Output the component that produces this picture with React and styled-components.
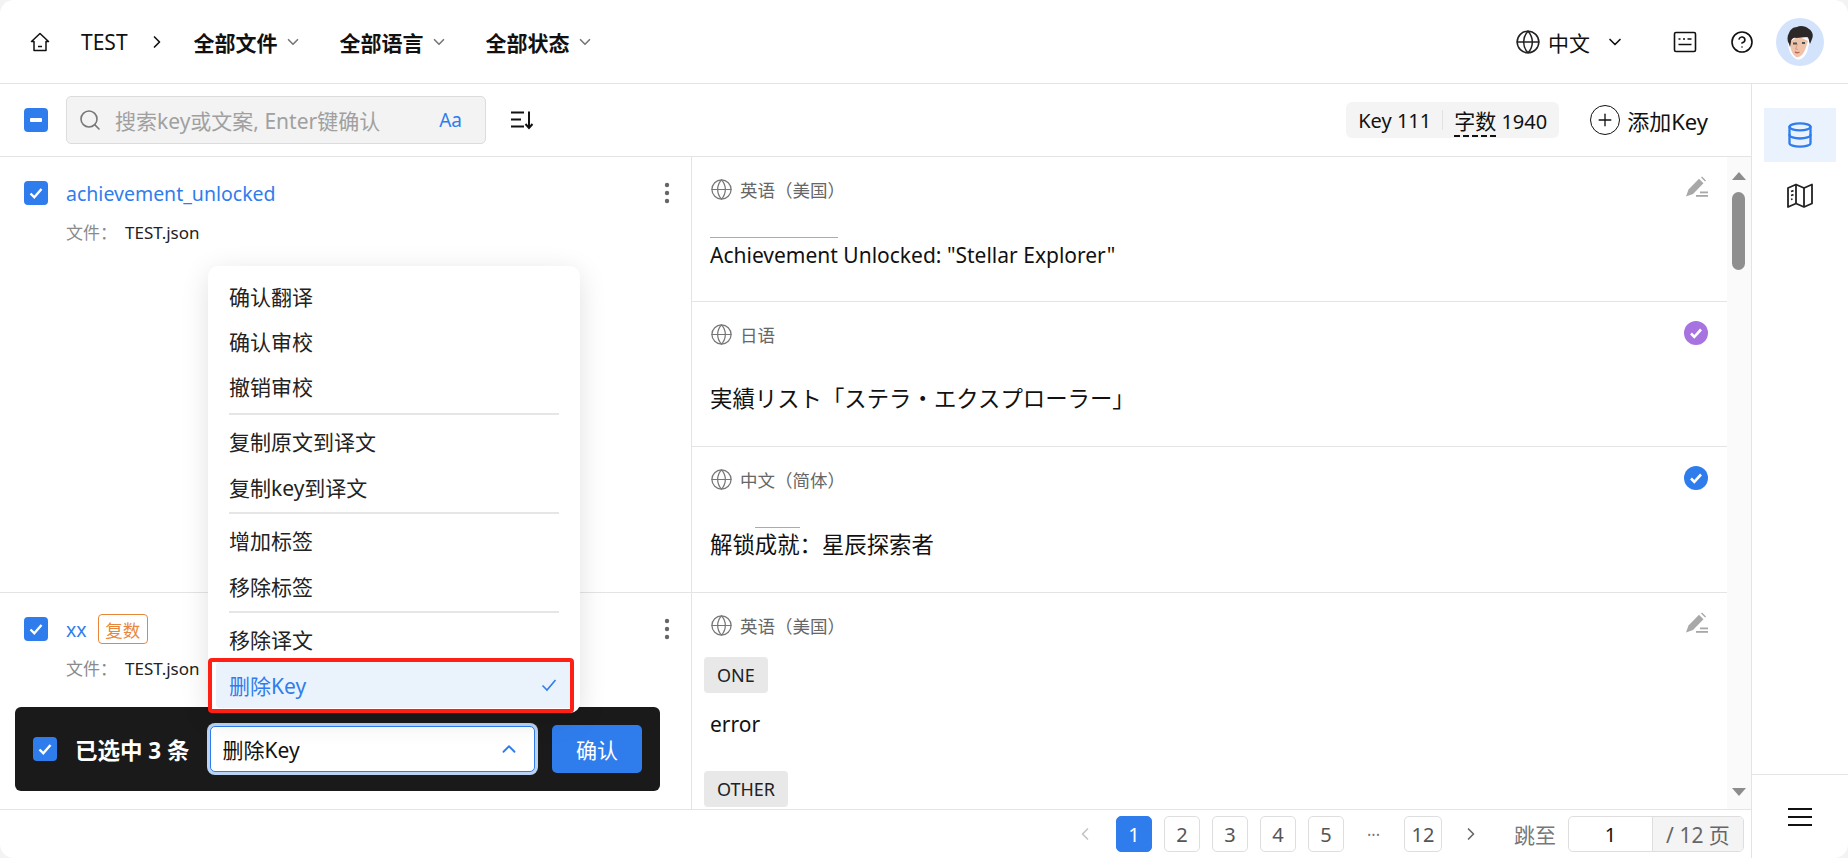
import styled, { createGlobalStyle } from "styled-components";
import { ChevronDown, ChevronLeft, ChevronRight, ChevronUp, CircleHelp, Database, Globe, Search, Plus } from "lucide-react";

const GlobalStyle = createGlobalStyle`
  html, body { margin: 0; height: 100%; background: #f3f3f3; overflow: hidden; }
  body { font-family: "Noto Sans", "Noto Sans CJK SC", sans-serif; color: #111; }
  * { box-sizing: border-box; }
`;

const BLUE = "#2f7ded";
const MENU_GROUPS = [
  ["确认翻译", "确认审校", "撤销审校"],
  ["复制原文到译文", "复制key到译文"],
  ["增加标签", "移除标签"],
  ["移除译文"],
];

function HomeIcon() {
  return (
    <svg width="24" height="24" viewBox="0 0 24 24" fill="none" stroke="#111" strokeWidth="1.5" strokeLinejoin="round">
      <path d="M3.5 11.5 12 3.5l8.5 8H18v9H6v-9z" />
      <path d="M10 16.5h4" />
    </svg>
  );
}

function SortIcon() {
  return (
    <svg width="24" height="20" viewBox="0 0 24 20" fill="none" stroke="#111" strokeWidth="2">
      <path d="M1 2.5h13M1 9.5h10M1 16.5h13M19 1.5v16M15.5 14l3.500 4 3.500-4" />
    </svg>
  );
}

function KeyboardIcon() {
  return (
    <svg width="24" height="22" viewBox="0 0 24 22" fill="none" stroke="#111" strokeWidth="1.6">
      <rect x="1.5" y="1.5" width="21" height="19" rx="1.5" />
      <path d="M5.5 8h2M10 8h2M14.5 8h4M5.5 13.5h13" />
    </svg>
  );
}

function MapIcon() {
  return (
    <svg width="28" height="26" viewBox="0 0 28 26" fill="none" stroke="#222" strokeWidth="1.8" strokeLinejoin="round">
      <path d="M2 5l8-3.500 8 3.500 8-3.500V20.500L18 24l-8-3.500L2 24z" />
      <path d="M10 1.500v19M18 5v19M5 8.500l2.500-.8M5 12.500l2.500-.8M5 16.500l1.500-.5" />
    </svg>
  );
}

function EditIcon() {
  return (
    <svg width="26" height="22" viewBox="0 0 26 22" fill="#a8a8a8">
      <path d="M1 20.5l2.500-7L14 2.800l4.500 4.500L8 18z" />
      <path d="M16 1.500l1-1 4 4-1 1z" />
      <rect x="11" y="19" width="12" height="1.8" />
      <rect x="15" y="15.5" width="8" height="1.8" />
    </svg>
  );
}

function DotsIcon() {
  return (
    <svg width="6" height="22" viewBox="0 0 6 22" fill="#666">
      <circle cx="3" cy="3" r="2.2" />
      <circle cx="3" cy="11" r="2.2" />
      <circle cx="3" cy="19" r="2.2" />
    </svg>
  );
}

function AvatarFace() {
  return (
    <svg width="48" height="48" viewBox="0 0 48 48">
      <circle cx="24" cy="24" r="24" fill="#d3e3fb" />
      <path d="M12 24c0 8 3 14 8 17 4 2 8-1 11-7l3-12-12-6z" fill="#fff" />
      <path d="M14 24c0 7 2 12 6 15 3 1 7-2 9-7l3-9-10-5z" fill="#efc3aa" />
      <path d="M13 26c-2-3-2-8 0-11 1-3 4-6 8-6 3-2 9-1 12 2 3 2 5 6 3 10l-2 5-1-3c0-2-1-4-2-4l-11 1c-2-1-5 1-5 4l-1 5z" fill="#2b2827" />
      <path d="M17 25.500h4M26 25h3" stroke="#44565c" strokeWidth="1.8" />
      <path d="M21.500 26l-2 5 2.500.5" stroke="#d99a82" strokeWidth="1" fill="none" />
      <path d="M19 34c2 1 3 1 4.500 0" stroke="#c0625a" strokeWidth="1.5" fill="none" />
    </svg>
  );
}

function Check({ minus }) {
  return (
    <CheckBox>
      {minus ? (
        <MinusBar />
      ) : (
        <svg width="16" height="16" viewBox="0 0 16 16" fill="none" stroke="#fff" strokeWidth="2.4">
          <path d="M2.500 8.500l3.800 3.800L13.500 4" />
        </svg>
      )}
    </CheckBox>
  );
}

function StatusMark({ status }) {
  if (status === "edit") return <EditIcon />;
  return (
    <StatusDot $status={status}>
      <svg width="16" height="16" viewBox="0 0 16 16" fill="none" stroke="#fff" strokeWidth="2.6">
        <path d="M3 8.500l3.300 3.300L13 4.500" />
      </svg>
    </StatusDot>
  );
}

function LangLabel({ children }) {
  return (
    <LangRow>
      <Globe size={23} strokeWidth={1.3} color="#777" />
      {children}
    </LangRow>
  );
}

export default function App() {
  const translations = [
    { id: "en", lang: "英语（美国）", status: "edit", latin: true, text: <><Mark>Achievement</Mark> Unlocked: "Stellar Explorer"</> },
    { id: "ja", lang: "日语", status: "reviewed", text: <JaText lang="ja">実績リスト「ステラ・エクスプローラー」</JaText> },
    { id: "zh", lang: "中文（简体）", status: "done", text: <>解锁<Mark>成就</Mark>：星辰探索者</> },
  ];

  return (
    <Frame>
      <GlobalStyle />
      <Header>
        <HomeIcon />
        <Project>TEST</Project>
        <ChevronRight size={20} strokeWidth={2} color="#111" />
        <Filters>
          {["全部文件", "全部语言", "全部状态"].map((f) => (
            <Filter key={f}>
              {f}
              <ChevronDown size={18} strokeWidth={2.2} color="#777" />
            </Filter>
          ))}
        </Filters>
        <HeaderRight>
          <LangSwitch>
            <Globe size={26} strokeWidth={1.4} color="#222" />
            中文
            <ChevronDown size={20} strokeWidth={2} color="#111" />
          </LangSwitch>
          <KeyboardIcon />
          <CircleHelp size={24} strokeWidth={1.6} color="#111" />
          <Avatar><AvatarFace /></Avatar>
        </HeaderRight>
      </Header>

      <Body>
        <Main>
          <Toolbar>
            <Check minus />
            <SearchBox>
              <Search size={24} strokeWidth={1.6} color="#777" />
              <Placeholder>搜索key或文案, Enter键确认</Placeholder>
              <CaseToggle>Aa</CaseToggle>
            </SearchBox>
            <SortIcon />
            <Stats>
              <span>Key 111</span>
              <StatDivider />
              <span><Dashed>字数</Dashed> 1940</span>
            </Stats>
            <AddKey>
              <AddCircle><Plus size={20} strokeWidth={1.6} color="#111" /></AddCircle>
              添加Key
            </AddKey>
          </Toolbar>

          <Content>
            <List>
              <KeyRow>
                <KeyCell>
                  <KeyTitle>
                    <Check />
                    <KeyName>achievement_unlocked</KeyName>
                    <DotsSlot><DotsIcon /></DotsSlot>
                  </KeyTitle>
                  <FileLine><FileLabel>文件：</FileLabel>TEST.json</FileLine>
                </KeyCell>
                <Cells>
                  {translations.map((t) => (
                    <Cell key={t.id}>
                      <CellTop>
                        <LangLabel>{t.lang}</LangLabel>
                        <StatusMark status={t.status} />
                      </CellTop>
                      <CellText $latin={t.latin}>{t.text}</CellText>
                    </Cell>
                  ))}
                </Cells>
              </KeyRow>
              <KeyRow>
                <KeyCell>
                  <KeyTitle>
                    <Check />
                    <KeyName>xx</KeyName>
                    <PluralTag>复数</PluralTag>
                    <DotsSlot><DotsIcon /></DotsSlot>
                  </KeyTitle>
                  <FileLine><FileLabel>文件：</FileLabel>TEST.json</FileLine>
                </KeyCell>
                <Cells>
                  <PluralCell>
                    <CellTop>
                      <LangLabel>英语（美国）</LangLabel>
                      <EditIcon />
                    </CellTop>
                    <Chip>ONE</Chip>
                    <PluralText>error</PluralText>
                    <Chip>OTHER</Chip>
                  </PluralCell>
                </Cells>
              </KeyRow>
            </List>
            <ScrollBar>
              <ArrowUp />
              <Thumb />
              <ArrowDown />
            </ScrollBar>

            <ActionMenu>
              {MENU_GROUPS.map((group, i) => (
                <MenuGroup key={i}>
                  {i > 0 && <MenuDivider />}
                  {group.map((item) => (
                    <MenuItem key={item}>{item}</MenuItem>
                  ))}
                </MenuGroup>
              ))}
              <MenuItem $selected>
                删除Key
                <svg width="16" height="14" viewBox="0 0 16 14" fill="none" stroke={BLUE} strokeWidth="1.6">
                  <path d="M1.500 7.500l4.500 4.500L14.500 2" />
                </svg>
              </MenuItem>
              <RedBox />
            </ActionMenu>

            <BatchBar>
              <Check />
              <BatchCount>已选中 3 条</BatchCount>
              <BatchSelect>
                删除Key
                <ChevronUp size={22} strokeWidth={2} color={BLUE} />
              </BatchSelect>
              <ConfirmButton>确认</ConfirmButton>
            </BatchBar>
          </Content>

          <Footer>
            <PrevPage><ChevronLeft size={20} strokeWidth={2} color="#c4c4c4" /></PrevPage>
            <Page $active>1</Page>
            <Page>2</Page>
            <Page>3</Page>
            <Page>4</Page>
            <Page>5</Page>
            <Ellipsis>•••</Ellipsis>
            <Page $wide>12</Page>
            <NextPage><ChevronRight size={20} strokeWidth={2} color="#666" /></NextPage>
            <JumpLabel>跳至</JumpLabel>
            <JumpGroup>
              <JumpInput>1</JumpInput>
              <JumpAddon>/ 12 页</JumpAddon>
            </JumpGroup>
          </Footer>
        </Main>

        <Sidebar>
          <SideTab $active><Database size={28} strokeWidth={2} color={BLUE} /></SideTab>
          <SideTab><MapIcon /></SideTab>
          <SideBottom>
            <Burger />
          </SideBottom>
        </Sidebar>
      </Body>
    </Frame>
  );
}

const Frame = styled.div`
  width: 1848px;
  height: 858px;
  display: flex;
  flex-direction: column;
  background: #fff;
  border-radius: 14px;
  overflow: hidden;
`;

const Header = styled.header`
  height: 84px;
  flex: none;
  display: flex;
  align-items: center;
  padding: 0 24px 0 28px;
  border-bottom: 1px solid #e4e4e4;
`;

const Project = styled.span`
  margin: 0 19px 0 29px;
  font-size: 21px;
`;

const Filters = styled.div`
  display: flex;
  gap: 38px;
  margin-left: 27px;
`;

const Filter = styled.span`
  display: flex;
  align-items: center;
  gap: 6px;
  font-size: 21px;
  font-weight: 700;
`;

const HeaderRight = styled.div`
  margin-left: auto;
  display: flex;
  align-items: center;
  gap: 33px;
`;

const LangSwitch = styled.span`
  display: flex;
  align-items: center;
  gap: 7px;
  font-size: 21px;
  margin-right: 15px;

  svg:last-child {
    margin-left: 8px;
  }
`;

const Avatar = styled.span`
  display: flex;
  margin-left: -11px;
`;

const Body = styled.div`
  flex: 1;
  min-height: 0;
  display: flex;
`;

const Main = styled.div`
  flex: 1;
  min-width: 0;
  display: flex;
  flex-direction: column;
`;

const Toolbar = styled.div`
  height: 73px;
  flex: none;
  display: flex;
  align-items: center;
  padding: 0 24px;
  border-bottom: 1px solid #e4e4e4;

  > svg {
    margin-left: 24px;
  }
`;

const CheckBox = styled.span`
  width: 24px;
  height: 24px;
  flex: none;
  display: flex;
  align-items: center;
  justify-content: center;
  border-radius: 4px;
  background: ${BLUE};
`;

const MinusBar = styled.span`
  width: 12px;
  height: 3.5px;
  border-radius: 1px;
  background: #fff;
`;

const SearchBox = styled.div`
  width: 420px;
  height: 48px;
  margin-left: 18px;
  padding: 0 23px 0 11px;
  display: flex;
  align-items: center;
  background: #f3f3f3;
  border: 1px solid #dcdcdc;
  border-radius: 5px;
`;

const Placeholder = styled.span`
  margin-left: 13px;
  font-size: 21px;
  color: #a0a0a0;
  white-space: nowrap;
`;

const CaseToggle = styled.span`
  margin-left: auto;
  font-size: 19px;
  color: ${BLUE};
`;

const Stats = styled.div`
  margin-left: auto;
  height: 36px;
  padding: 0 12px;
  display: flex;
  align-items: center;
  gap: 11px;
  background: #f4f4f4;
  border-radius: 6px;
  font-size: 20px;
  white-space: nowrap;
`;

const StatDivider = styled.i`
  width: 1px;
  height: 20px;
  background: #e2e2e2;
`;

const Dashed = styled.span`
  font-size: 21px;
  border-bottom: 2px dashed #111;
`;

const AddKey = styled.div`
  margin-left: 31px;
  margin-right: 19px;
  display: flex;
  align-items: center;
  gap: 7px;
  font-size: 22px;
  white-space: nowrap;
`;

const AddCircle = styled.span`
  width: 30px;
  height: 30px;
  display: flex;
  align-items: center;
  justify-content: center;
  border: 1.6px solid #111;
  border-radius: 50%;
`;

const Content = styled.div`
  position: relative;
  flex: 1;
  min-height: 0;
  display: flex;
  overflow: hidden;
`;

const List = styled.div`
  flex: 1;
  min-width: 0;
  display: flex;
  flex-direction: column;
`;

const KeyRow = styled.div`
  display: grid;
  grid-template-columns: 692px 1fr;
  border-bottom: 1px solid #e4e4e4;

  &:last-child {
    flex: 1;
    min-height: 0;
    border-bottom: 0;
  }
`;

const KeyCell = styled.div`
  padding: 24px 24px 0;
  border-right: 1px solid #e4e4e4;
`;

const KeyTitle = styled.div`
  display: flex;
  align-items: center;
  height: 24px;
  gap: 18px;
`;

const KeyName = styled.span`
  font-size: 19.5px;
  color: ${BLUE};
`;

const DotsSlot = styled.span`
  display: flex;
  margin-left: auto;
  margin-right: -3px;
`;

const PluralTag = styled.span`
  margin-left: -7px;
  width: 50px;
  height: 30px;
  flex: none;
  display: flex;
  align-items: center;
  justify-content: center;
  border: 1px solid #e8873a;
  border-radius: 4px;
  color: #e8873a;
  font-size: 17.5px;
`;

const FileLine = styled.div`
  margin: 14px 0 0 42px;
  font-size: 17px;
  color: #222;
  white-space: nowrap;
`;

const FileLabel = styled.span`
  display: inline-block;
  width: 59px;
  color: #8a8a8a;
`;

const Cells = styled.div`
  min-width: 0;
`;

const Cell = styled.div`
  height: 145px;
  padding: 19px 16px 0 18px;
  border-bottom: 1px solid #e4e4e4;

  &:last-child {
    border-bottom: 0;
  }
`;

const PluralCell = styled.div`
  padding: 19px 16px 0 18px;
`;

const CellTop = styled.div`
  display: flex;
  align-items: flex-start;
  justify-content: space-between;
  min-height: 28px;
`;

const LangRow = styled.span`
  display: flex;
  align-items: center;
  gap: 7px;
  margin-top: 1px;
  font-size: 17.5px;
  color: #666;
`;

const StatusDot = styled.span`
  width: 24px;
  height: 24px;
  margin-right: 3px;
  display: flex;
  align-items: center;
  justify-content: center;
  border-radius: 50%;
  background: ${({ $status }) => ($status === "reviewed" ? "#a673e0" : BLUE)};
`;

const CellText = styled.div`
  margin-top: 33px;
  font-size: ${({ $latin }) => ($latin ? "21px" : "22.4px")};
  line-height: 34px;
  white-space: nowrap;
`;

const Mark = styled.span`
  display: inline-block;
  line-height: 34px;
  border-top: 1px solid #e8a526;
`;

const JaText = styled.span`
  font-family: "Noto Sans", "Noto Sans CJK JP", sans-serif;
`;

const Chip = styled.div`
  display: table;
  margin: 17px 0 0 -6px;
  padding: 0 13px;
  height: 36px;
  line-height: 36px;
  background: #e8e8e8;
  border-radius: 4px;
  font-size: 18px;
  color: #222;
`;

const PluralText = styled.div`
  margin: 16px 0 32px;
  font-size: 21px;
  line-height: 30px;
`;

const ScrollBar = styled.div`
  position: relative;
  flex: none;
  width: 24px;
  background: #fafafa;
`;

const ArrowUp = styled.i`
  position: absolute;
  top: 15px;
  left: 5px;
  border: 7px solid transparent;
  border-top: 0;
  border-bottom: 8px solid #8c8c8c;
`;

const ArrowDown = styled.i`
  position: absolute;
  bottom: 13px;
  left: 5px;
  border: 7px solid transparent;
  border-bottom: 0;
  border-top: 8px solid #8c8c8c;
`;

const Thumb = styled.i`
  position: absolute;
  top: 35px;
  left: 5px;
  width: 13px;
  height: 78px;
  border-radius: 7px;
  background: #8f8f8f;
`;

const ActionMenu = styled.div`
  position: absolute;
  z-index: 2;
  left: 208px;
  top: 109px;
  width: 372px;
  height: 447px;
  padding-top: 7px;
  background: #fff;
  border-radius: 10px;
  box-shadow: 0 6px 28px rgba(0, 0, 0, 0.12);
`;

const MenuItem = styled.div`
  height: 46px;
  margin: 0 8px;
  padding: 0 13px;
  display: flex;
  align-items: center;
  justify-content: space-between;
  border-radius: 4px;
  font-size: 21px;
  color: ${({ $selected }) => ($selected ? BLUE : "#222")};
  background: ${({ $selected }) => ($selected ? "#eaf2fb" : "transparent")};

  svg {
    margin-right: 2px;
  }
`;

const MenuGroup = styled.div`
  &:first-child {
    margin-bottom: 5px;

    ${MenuItem} {
      height: 45px;
    }
  }
`;

const MenuDivider = styled.div`
  height: 2px;
  margin: 2px 21px 3px;
  background: #e6e6e6;
`;

const RedBox = styled.div`
  position: absolute;
  left: 0;
  top: 392px;
  width: 366px;
  height: 55px;
  border: 4px solid #ff2015;
  border-radius: 4px;
`;

const BatchBar = styled.div`
  position: absolute;
  z-index: 1;
  left: 15px;
  top: 550px;
  width: 645px;
  height: 84px;
  padding: 0 18px;
  display: flex;
  align-items: center;
  background: #1a1a1a;
  border-radius: 6px;
`;

const BatchCount = styled.span`
  margin-left: 18px;
  color: #fff;
  font-size: 22.5px;
  font-weight: 700;
  white-space: nowrap;
`;

const BatchSelect = styled.div`
  width: 326px;
  height: 46px;
  margin-left: 20px;
  padding: 0 14px 0 12px;
  display: flex;
  align-items: center;
  justify-content: space-between;
  background: #fff;
  border: 1.5px solid ${BLUE};
  border-radius: 5px;
  box-shadow: 0 0 0 3px #bcd3f4;
  font-size: 21px;
`;

const ConfirmButton = styled.button`
  width: 90px;
  height: 48px;
  margin-left: 17px;
  border: 0;
  border-radius: 5px;
  background: ${BLUE};
  color: #fff;
  font: inherit;
  font-size: 21px;
`;

const Footer = styled.div`
  height: 49px;
  flex: none;
  display: flex;
  align-items: center;
  justify-content: flex-end;
  gap: 12px;
  padding-right: 7px;
  border-top: 1px solid #e4e4e4;
`;

const PrevPage = styled.span`
  display: flex;
  margin-right: 9px;
`;

const Page = styled.span`
  width: ${({ $wide }) => ($wide ? "38px" : "36px")};
  height: 36px;
  display: flex;
  align-items: center;
  justify-content: center;
  border: 1px solid ${({ $active }) => ($active ? BLUE : "#dedede")};
  border-radius: 5px;
  background: ${({ $active }) => ($active ? BLUE : "#fff")};
  color: ${({ $active }) => ($active ? "#fff" : "#555")};
  font-size: 20px;
`;

const Ellipsis = styled.span`
  width: 36px;
  text-align: center;
  font-size: 9px;
  letter-spacing: 1px;
  color: #777;
`;

const NextPage = styled.span`
  display: flex;
  margin: 0 21px 0 7px;
`;

const JumpLabel = styled.span`
  font-size: 21px;
  color: #777;
`;

const JumpGroup = styled.div`
  width: 176px;
  height: 36px;
  display: flex;
  border: 1px solid #dedede;
  border-radius: 5px;
  overflow: hidden;
`;

const JumpInput = styled.span`
  width: 84px;
  display: flex;
  align-items: center;
  justify-content: center;
  border-right: 1px solid #dedede;
  font-size: 20px;
`;

const JumpAddon = styled.span`
  flex: 1;
  display: flex;
  align-items: center;
  justify-content: center;
  background: #f4f4f4;
  color: #666;
  font-size: 21px;
  white-space: nowrap;
`;

const Sidebar = styled.aside`
  width: 97px;
  flex: none;
  display: flex;
  flex-direction: column;
  align-items: center;
  border-left: 1px solid #e4e4e4;
`;

const SideTab = styled.div`
  width: 72px;
  height: 54px;
  margin-top: ${({ $active }) => ($active ? "24px" : "0")};
  display: flex;
  align-items: center;
  justify-content: center;
  background: ${({ $active }) => ($active ? "#eaf3fd" : "transparent")};
  padding-top: ${({ $active }) => ($active ? "0" : "14px")};
`;

const SideBottom = styled.div`
  margin-top: auto;
  align-self: stretch;
  height: 84px;
  display: flex;
  align-items: center;
  justify-content: center;
  border-top: 1px solid #e4e4e4;
`;

const Burger = styled.i`
  width: 24px;
  height: 18px;
  border-top: 2px solid #111;
  border-bottom: 2px solid #111;
  background: linear-gradient(#111, #111) center / 100% 2px no-repeat;
`;
